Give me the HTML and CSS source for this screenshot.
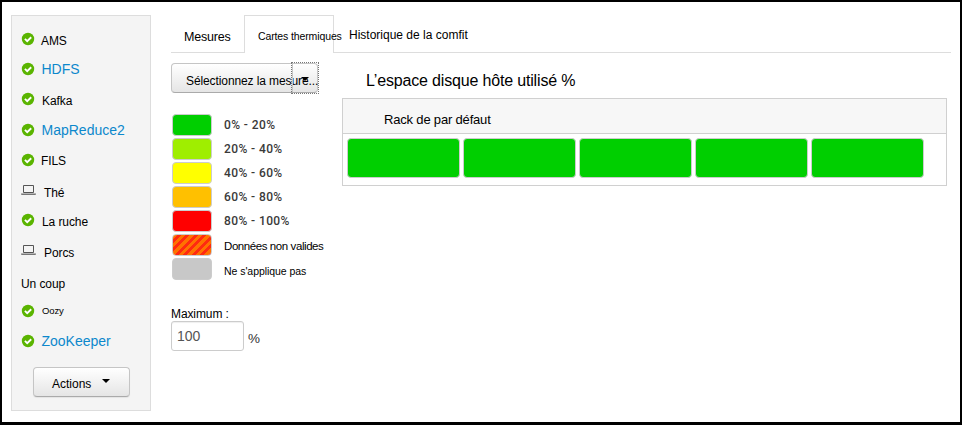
FILE: index.html
```
<!DOCTYPE html>
<html lang="fr">
<head>
<meta charset="utf-8">
<title>Cartes thermiques</title>
<link rel="stylesheet" href="styles.css">
</head>
<body>
<svg width="0" height="0" class="defs" aria-hidden="true">
  <symbol id="ok" viewBox="0 0 14 14"><circle cx="7" cy="7" r="6.2" fill="#5ab400"/><path d="M3.9 6.9 6.2 9.1 10.2 5.2" fill="none" stroke="#fff" stroke-width="1.9"/></symbol>
  <symbol id="laptop" viewBox="0 0 15 12"><path d="M2.5 8.5v-7h10v7z" fill="none" stroke="#555"/><path d="M0 9.5h15v.7q-.3.8-1 .8H1q-.7 0-1-.8z" fill="#777"/></symbol>
</svg>
<div class="window">
  <aside class="sidebar">
    <ul class="services">
      <li><svg class="ok"><use href="#ok"/></svg><span class="name ams">AMS</span></li>
      <li><svg class="ok"><use href="#ok"/></svg><a class="link">HDFS</a></li>
      <li><svg class="ok"><use href="#ok"/></svg><span class="name kafka">Kafka</span></li>
      <li><svg class="ok"><use href="#ok"/></svg><a class="link">MapReduce2</a></li>
      <li><svg class="ok"><use href="#ok"/></svg><span class="name fils">FILS</span></li>
      <li><svg class="laptop"><use href="#laptop"/></svg><span class="name client">Thé</span></li>
      <li><svg class="ok"><use href="#ok"/></svg><span class="name ruche">La ruche</span></li>
      <li><svg class="laptop"><use href="#laptop"/></svg><span class="name client">Porcs</span></li>
      <li><span class="name coup">Un coup</span></li>
      <li><svg class="ok"><use href="#ok"/></svg><span class="oozy">Oozy</span></li>
      <li><svg class="ok"><use href="#ok"/></svg><a class="link">ZooKeeper</a></li>
    </ul>
    <button class="actions"><span>Actions</span><i class="caret"></i></button>
  </aside>
  <main class="main">
    <nav class="tabs">
      <a class="tab first">Mesures</a>
      <a class="tab active">Cartes thermiques</a>
      <a class="tab last">Historique de la comfit</a>
    </nav>
    <div class="content">
      <section class="controls">
        <div class="select"><span class="select-text">Sélectionnez la mesure...</span><span class="toggle"><i class="caret"></i></span></div>
        <ul class="legend">
          <li><i class="swatch green"></i><span>0% - 20%</span></li>
          <li><i class="swatch lime"></i><span>20% - 40%</span></li>
          <li><i class="swatch yellow"></i><span>40% - 60%</span></li>
          <li><i class="swatch orange"></i><span>60% - 80%</span></li>
          <li><i class="swatch red"></i><span>80% - 100%</span></li>
          <li><i class="swatch invalid"></i><span class="invalid-text">Données non valides</span></li>
          <li><i class="swatch na"></i><span class="na-text">Ne s'applique pas</span></li>
        </ul>
        <label class="max-label" for="max">Maximum :</label>
        <div class="max"><input id="max" type="text" value="100"><span>%</span></div>
      </section>
      <section class="heatmap">
        <h1>L’espace disque hôte utilisé %</h1>
        <div class="rack">
          <div class="rack-name">Rack de par défaut</div>
          <div class="hosts"><i></i><i></i><i></i><i></i><i></i></div>
        </div>
      </section>
    </div>
  </main>
</div>
</body>
</html>
```
FILE: styles.css
```
* { box-sizing: border-box; }
body { margin: 0; font: 13px/20px "Liberation Sans", Arial, sans-serif; color: #000; background: #fff; }
ul { list-style: none; margin: 0; padding: 0; }
i { display: block; }
.defs { display: block; }
.window { display: flex; align-items: flex-start; gap: 20px; width: 962px; height: 425px; padding: 13px 9px 0; border: 2px solid #000; border-bottom-width: 3px; overflow: hidden; white-space: nowrap; }

.sidebar { width: 140px; height: 396px; flex: none; padding: 8px 9px 0; background: #f4f4f4; border: 1px solid #ddd; }
.services li { display: flex; align-items: center; height: 30.2px; }
.ok { width: 14px; height: 14px; flex: none; }
.laptop { width: 15px; height: 12px; flex: none; }
.name { margin-left: 6px; padding-top: 3px; font-size: 12px; letter-spacing: -.08px; }
.kafka, .ruche { margin-left: 7px; }
.client { margin-left: 8px; padding-top: 5px; }
.coup { margin-left: 0; padding-top: 7px; }
.link { margin-left: 6.5px; font-size: 14px; color: #0c88cc; }
.oozy { margin-left: 7px; font-size: 9.5px; letter-spacing: -.1px; }
.actions { display: flex; align-items: center; width: 97px; height: 30px; margin: 11px 0 0 12px; padding: 3px 0 0 18px; border: 1px solid #c5c5c5; border-bottom-color: #aaa; border-radius: 4px; background: linear-gradient(#fff, #e5e5e5); font: 12px/20px "Liberation Sans", Arial, sans-serif; color: #000; box-shadow: 0 1px 1px #0001; }
.caret { width: 0; height: 0; border: 4px solid transparent; border-top-color: #000; border-bottom: 0; }
.actions .caret { margin: -5px 0 0 11px; }

.main { width: 780px; }
.tabs { display: flex; height: 38px; border-bottom: 1px solid #ddd; }
.tab { height: 38px; padding-top: 12px; }
.tab.first { width: 73px; padding-left: 13px; font-size: 12.5px; letter-spacing: -.2px; }
.tab.active { width: 90px; padding: 10px 0 0 13px; border: 1px solid #ddd; border-bottom: 0; background: #fff; font-size: 10.5px; letter-spacing: -.12px; }
.tab.last { padding: 10px 0 0 15px; font-size: 12px; }

.content { display: flex; }
.controls { width: 171px; padding-top: 10px; }
.select { position: relative; width: 147px; height: 30px; padding: 7px 0 0 14px; border: 1px solid #c5c5c5; border-bottom-color: #aaa; border-radius: 4px; background: linear-gradient(#fff, #e5e5e5); font-size: 12px; letter-spacing: -.1px; }
.toggle { position: absolute; left: 119px; top: -2px; width: 28px; height: 32px; border: 1px dotted #777; }
.toggle::before { content: ""; position: absolute; left: 0; top: 1px; width: 1px; height: 28px; background: #c5c5c5; }
.toggle .caret { margin: 14px 0 0 9px; }
.legend { margin: 20px 0 0 1px; }
.legend li { display: flex; align-items: center; gap: 12px; height: 24px; font: 500 12px/20px Roboto, sans-serif; letter-spacing: .4px; color: #3a3a3a; }
.swatch { width: 40px; height: 22px; border: 1px solid #ccc; border-radius: 4px; }
.green { background: #00cf00; }
.lime { background: #9fee00; }
.yellow { background: #ff0; }
.orange { background: #ffc000; }
.red { background: #f00; }
.invalid { background: repeating-linear-gradient(135deg, #ff7200 0 3px, #ff2a10 3px 6px); }
.na { background: #c8c8c8; }
.legend .invalid-text { padding-top: 2px; font: 11.5px/20px "Liberation Sans", Arial, sans-serif; letter-spacing: -.42px; color: #000; }
.legend .na-text { padding-top: 3px; font: 10.5px/20px "Liberation Sans", Arial, sans-serif; letter-spacing: -.05px; color: #000; }
.max-label { display: block; margin-top: 23px; height: 17px; font-size: 12px; letter-spacing: -.1px; }
.max { display: flex; gap: 4px; }
.max input { width: 73px; height: 30px; margin: 0; padding: 0 5px; border: 1px solid #ccc; border-radius: 3px; box-shadow: inset 0 1px 1px #0001; font: 14px/20px "Liberation Sans", Arial, sans-serif; color: #555; }
.max span { padding-top: 8px; font-size: 13.5px; color: #333; }

.heatmap { width: 605px; padding-top: 16px; }
h1 { margin: 0 0 0 24px; height: 29px; font-size: 16px; line-height: 24px; font-weight: 400; letter-spacing: -.17px; }
.rack { height: 88px; border: 1px solid #d0d0d0; }
.rack-name { height: 35px; padding: 11px 0 0 41px; background: #f7f7f7; border-bottom: 1px solid #d0d0d0; font-size: 13px; letter-spacing: -.18px; }
.hosts { display: flex; gap: 3px; padding: 4px; }
.hosts i { width: 113px; height: 40px; border: 1px solid #ccc; border-radius: 4px; background: #00cf00; }
```
